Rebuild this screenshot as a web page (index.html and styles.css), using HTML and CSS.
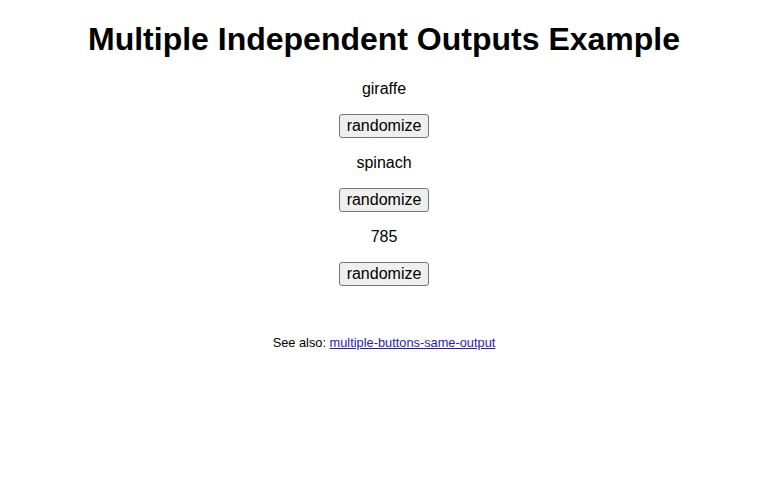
FILE: index.html
```html
<!DOCTYPE html>
<html>
<head>
<meta charset="utf-8">
<title>Multiple Independent Outputs Example</title>
<link rel="stylesheet" href="styles.css">
</head>
<body>
<h1 class="title">Multiple Independent Outputs Example</h1>
<div class="outputs">
  <div class="output">
    <p class="value">giraffe</p>
    <button class="randomize">randomize</button>
  </div>
  <div class="output">
    <p class="value">spinach</p>
    <button class="randomize">randomize</button>
  </div>
  <div class="output">
    <p class="value">785</p>
    <button class="randomize">randomize</button>
  </div>
</div>
<p class="see-also">See also: <a href="#">multiple-buttons-same-output</a></p>
</body>
</html>
```
FILE: styles.css
```css
body {
  margin: 0 8px;
  font-family: "Liberation Sans", Arial, sans-serif;
  color: #000;
  background: #fff;
  text-align: center;
}

.title {
  font-size: 32px;
  font-weight: bold;
  margin: 21.44px 0;
}

.output {
  display: flex;
  flex-direction: column;
  align-items: center;
}

.value {
  font-size: 16px;
  margin: 16px 0;
}

.output:first-child .value {
  margin-top: 0;
}

.randomize {
  font-family: "Liberation Sans", Arial, sans-serif;
  font-size: 16px;
  color: #000;
  background: #efefef;
  border: 1px solid #767676;
  border-radius: 3px;
  padding: 1px 7px;
  height: 24px;
}

.see-also {
  font-size: 12.8px;
  margin-top: 49px;
}

.see-also a {
  color: #2a1bb0;
}
```
